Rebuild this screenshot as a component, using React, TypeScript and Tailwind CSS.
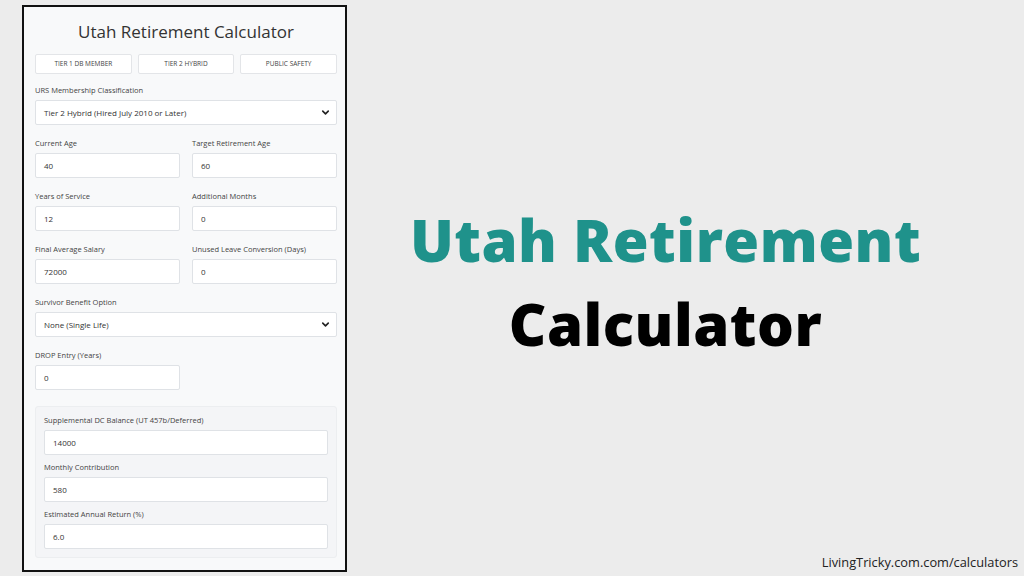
import React from "react";
import { ChevronDown } from "lucide-react";

const font = { fontFamily: '"Open Sans", "Noto Sans", sans-serif' };

function Label({ children }: { children: React.ReactNode }) {
  return <div className="text-[7.5px] leading-[10px] text-[#444] mb-[5px]">{children}</div>;
}

function Input({ value }: { value: string }) {
  return (
    <div className="h-[25px] bg-white border border-[#dfe2e6] rounded-[2px] flex items-center pl-[8px] text-[8px] text-[#333]">
      {value}
    </div>
  );
}

function Select({ value }: { value: string }) {
  return (
    <div className="h-[25px] bg-white border border-[#dfe2e6] rounded-[2px] flex items-center justify-between pl-[8px] pr-[5px] text-[8px] text-[#333]">
      <span>{value}</span>
      <ChevronDown size={11} strokeWidth={3.5} color="#222" />
    </div>
  );
}

function Field({ label, value, select }: { label: string; value: string; select?: boolean }) {
  return (
    <div className="flex flex-col">
      <Label>{label}</Label>
      {select ? <Select value={value} /> : <Input value={value} />}
    </div>
  );
}

export default function App() {
  return (
    <div className="w-[1024px] h-[576px] bg-[#ececec] flex overflow-hidden" style={font}>
      <div className="ml-[22px] mt-[5px] w-[325px] h-[567px] border-2 border-[#111] bg-[#f8f9fa] px-[11px] pr-[8px] flex flex-col shrink-0">
        <div className="text-center text-[17px] text-[#333] font-medium mt-[13px] leading-[24px]">Utah Retirement Calculator</div>
        <div className="grid grid-cols-3 gap-[6px] mt-[10px]">
          {["TIER 1 DB MEMBER", "TIER 2 HYBRID", "PUBLIC SAFETY"].map((t) => (
            <div key={t} className="h-[20px] bg-white border border-[#e3e5e8] rounded-[2px] flex items-center justify-center text-[6.5px] text-[#444]">
              {t}
            </div>
          ))}
        </div>
        <div className="mt-[11px] flex flex-col gap-[13px]">
          <Field label="URS Membership Classification" value="Tier 2 Hybrid (Hired July 2010 or Later)" select />
          <div className="grid grid-cols-2 gap-x-[12px] gap-y-[13px]">
            <Field label="Current Age" value="40" />
            <Field label="Target Retirement Age" value="60" />
            <Field label="Years of Service" value="12" />
            <Field label="Additional Months" value="0" />
            <Field label="Final Average Salary" value="72000" />
            <Field label="Unused Leave Conversion (Days)" value="0" />
          </div>
          <Field label="Survivor Benefit Option" value="None (Single Life)" select />
          <div className="grid grid-cols-2 gap-x-[12px]">
            <Field label="DROP Entry (Years)" value="0" />
          </div>
        </div>
        <div className="mt-[16px] bg-[#f4f5f7] border border-[#eceef0] rounded-[3px] px-[8px] pt-[8px] pb-[8px] flex flex-col gap-[7px]">
          <Field label="Supplemental DC Balance (UT 457b/Deferred)" value="14000" />
          <Field label="Monthly Contribution" value="580" />
          <Field label="Estimated Annual Return (%)" value="6.0" />
        </div>
      </div>
      <div className="flex-1 flex flex-col">
        <div className="flex-1 flex flex-col items-center justify-center pr-[40px] pt-[12px]">
          <div className="text-[58px] font-extrabold text-[#1f928b] leading-[84px] tracking-[0.5px]">Utah Retirement</div>
          <div className="text-[58px] font-extrabold text-black leading-[84px] tracking-[0.5px]">Calculator</div>
        </div>
        <div className="text-right pr-[6px] pb-[4px] text-[12.8px] text-[#222]">LivingTricky.com.com/calculators</div>
      </div>
    </div>
  );
}
